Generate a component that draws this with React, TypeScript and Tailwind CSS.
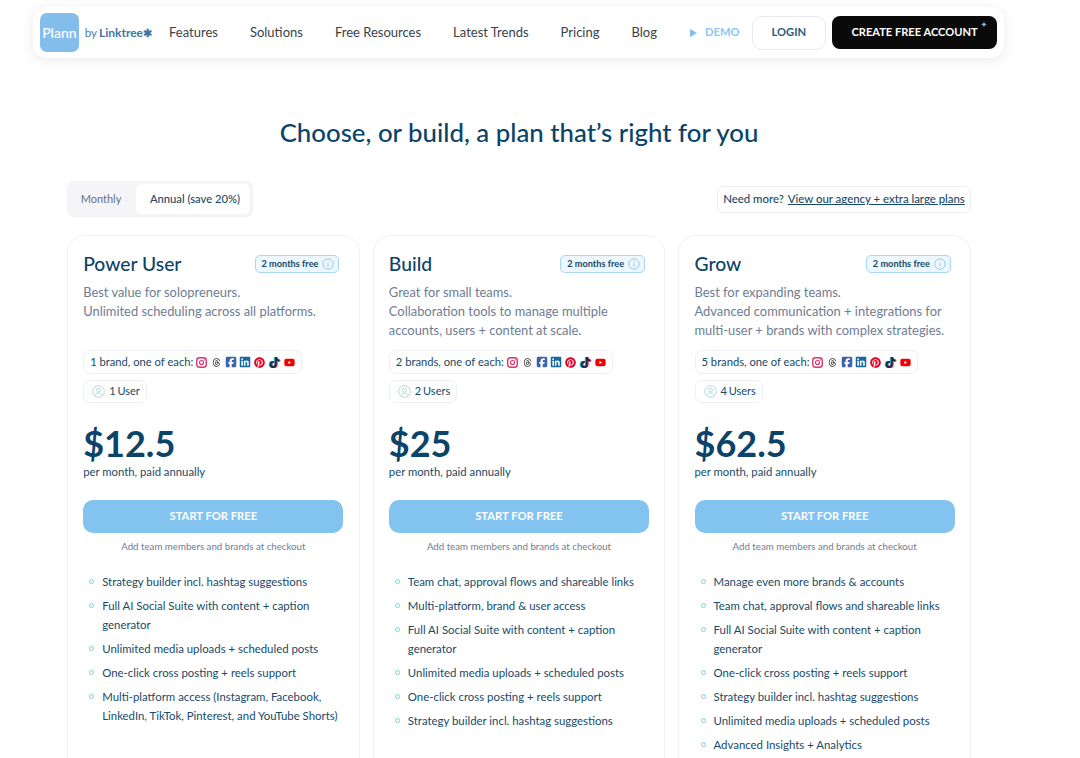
import React from 'react';
import { FaThreads, FaSquareFacebook, FaLinkedin, FaPinterest, FaTiktok, FaYoutube } from 'react-icons/fa6';

const navLinks = ['Features', 'Solutions', 'Free Resources', 'Latest Trends', 'Pricing', 'Blog'];

const plans = [
  {
    name: 'Power User',
    desc: ['Best value for solopreneurs.', 'Unlimited scheduling across all platforms.'],
    brands: '1 brand',
    users: '1 User',
    price: '$12.5',
    features: [
      'Strategy builder incl. hashtag suggestions',
      'Full AI Social Suite with content + caption generator',
      'Unlimited media uploads + scheduled posts',
      'One-click cross posting + reels support',
      'Multi-platform access (Instagram, Facebook, LinkedIn, TikTok, Pinterest, and YouTube Shorts)',
    ],
  },
  {
    name: 'Build',
    desc: ['Great for small teams.', 'Collaboration tools to manage multiple accounts, users + content at scale.'],
    brands: '2 brands',
    users: '2 Users',
    price: '$25',
    features: [
      'Team chat, approval flows and shareable links',
      'Multi-platform, brand & user access',
      'Full AI Social Suite with content + caption generator',
      'Unlimited media uploads + scheduled posts',
      'One-click cross posting + reels support',
      'Strategy builder incl. hashtag suggestions',
    ],
  },
  {
    name: 'Grow',
    desc: ['Best for expanding teams.', 'Advanced communication + integrations for multi-user + brands with complex strategies.'],
    brands: '5 brands',
    users: '4 Users',
    price: '$62.5',
    features: [
      'Manage even more brands & accounts',
      'Team chat, approval flows and shareable links',
      'Full AI Social Suite with content + caption generator',
      'One-click cross posting + reels support',
      'Strategy builder incl. hashtag suggestions',
      'Unlimited media uploads + scheduled posts',
      'Advanced Insights + Analytics',
    ],
  },
];

function InstagramIcon() {
  return (
    <svg width="11" height="11" viewBox="0 0 12 12" fill="none">
      <defs>
        <linearGradient id="ig" x1="0" y1="12" x2="12" y2="0">
          <stop offset="0" stopColor="#f9a13c" />
          <stop offset="0.5" stopColor="#e1306c" />
          <stop offset="1" stopColor="#7a4fd0" />
        </linearGradient>
      </defs>
      <rect x="0.8" y="0.8" width="10.4" height="10.4" rx="3" stroke="url(#ig)" strokeWidth="1.5" />
      <circle cx="6" cy="6" r="2.2" stroke="url(#ig)" strokeWidth="1.2" />
      <circle cx="8.8" cy="3.2" r="0.7" fill="#c13584" />
    </svg>
  );
}

function SocialIcons() {
  return (
    <span className="ml-[3px] flex items-center">
      <InstagramIcon />
      <FaThreads className="ml-[5px] text-[9px] text-[#333]" />
      <FaSquareFacebook className="ml-[4px] text-[12px] text-[#3b62ad]" />
      <FaLinkedin className="ml-[2px] text-[12px] text-[#17699f]" />
      <FaPinterest className="ml-[3px] text-[11px] text-[#e60023]" />
      <FaTiktok className="ml-[4px] text-[11px] text-[#10304a] [filter:drop-shadow(-1px_0_0_#25c4d8)_drop-shadow(1px_0_0_#fe2c55)]" />
      <FaYoutube className="ml-[4px] text-[11px] text-[#f00000]" />
    </span>
  );
}

function UserIcon() {
  return (
    <svg width="13" height="13" viewBox="0 0 14 14" fill="none" stroke="#9bd5d8" strokeWidth="0.9">
      <circle cx="7" cy="7" r="6.3" />
      <circle cx="7" cy="5.6" r="2.1" />
      <path d="M3.2 11.4c.6-1.9 2-2.8 3.8-2.8s3.2.9 3.8 2.8" />
    </svg>
  );
}

function InfoIcon() {
  return (
    <svg width="12" height="12" viewBox="0 0 12 12" fill="none" stroke="#8cc4ee" strokeWidth="0.9">
      <circle cx="6" cy="6" r="5.2" />
      <path d="M6 5.2v3.4" />
      <path d="M6 3.2v.8" />
    </svg>
  );
}

function PlanCard({ plan }: { plan: (typeof plans)[number] }) {
  return (
    <div className="h-[560px] rounded-[18px] border border-[#eef0f8] bg-white px-[15.2px] pt-[14px]">
      <div className="flex items-start justify-between">
        <h2 className="text-[19.3px] leading-[28px] font-medium text-[#0b4468]">{plan.name}</h2>
        <span className="mt-[5px] mr-[4px] flex h-[18px] items-center gap-[4px] rounded-[5px] border border-[#a9d6f5] bg-[#edf7fd] pr-[4px] pl-[6px] text-[9.2px] font-bold text-[#174a68]">
          2 months free
          <InfoIcon />
        </span>
      </div>
      <div className="mt-[5px] h-[67px] text-[12.9px] leading-[19px] text-[#6f7c92]">
        {plan.desc.map((line) => (
          <p key={line}>{line}</p>
        ))}
      </div>
      <div className="flex">
        <div className="flex h-[24px] items-center rounded-[7px] border border-[#eceef8] pr-[6px] pl-[6px] text-[11.2px] text-[#174a68]">
          {plan.brands}, one of each:
          <SocialIcons />
        </div>
      </div>
      <div className="mt-[6px] flex">
        <div className="flex h-[23px] items-center gap-[4px] rounded-[7px] border border-[#eceef8] pr-[6px] pl-[8px] text-[11px] text-[#174a68] [word-spacing:-1px]">
          <UserIcon />
          {plan.users}
        </div>
      </div>
      <div className="mt-[19px] text-[36px] leading-[42px] font-bold text-[#0b4468]">{plan.price}</div>
      <div className="text-[11.3px] leading-[16px] text-[#174a68]">per month, paid annually</div>
      <button className="mt-[20px] h-[33px] w-full rounded-[10px] bg-[#82c3ef] text-[11.2px] font-bold text-white">
        START FOR FREE
      </button>
      <div className="mt-[6px] text-center text-[9.7px] leading-[14px] text-[#6f7c92]">
        Add team members and brands at checkout
      </div>
      <ul className="mt-[19px] flex flex-col gap-[5px]">
        {plan.features.map((f) => (
          <li key={f} className="flex text-[11.4px] leading-[19px] text-[#174a68]">
            <span className="mt-[7px] mr-[8px] ml-[6px] h-[5px] w-[5px] shrink-0 rounded-full border border-[#7fd0d2]" />
            <span>{f}</span>
          </li>
        ))}
      </ul>
    </div>
  );
}

export default function App() {
  return (
    <div className="h-[758px] w-[1080px] overflow-hidden bg-white font-['Lato',sans-serif]">
      <div className="w-[1038px]">
        <div className="pt-[7px] pl-[33px]">
          <nav className="flex h-[51px] w-[971px] items-center rounded-[14px] bg-white pr-[7px] pl-[7px] shadow-[0_2px_14px_rgba(0,0,0,0.09)]">
            <div className="flex h-[39px] w-[39px] items-center justify-center rounded-[7px] bg-[#82bdec] text-[14px] font-medium text-white">
              Plann
            </div>
            <span className="ml-[6px] text-[11.5px] text-[#4d7ea8]">by</span>
            <span className="ml-[2px] text-[12px] font-bold text-[#3f76a5]">Linktree</span>
            <span className="text-[11px] leading-none font-bold text-[#3f76a5]">✱</span>
            <div className="ml-[17px] flex gap-[32px] whitespace-nowrap">
              {navLinks.map((l) => (
                <a key={l} className="text-[13px] text-[#3a3f47]">
                  {l}
                </a>
              ))}
            </div>
            <span className="ml-[33px] h-0 w-0 border-y-[4px] border-l-[7px] border-y-transparent border-l-[#82bdec]" />
            <span className="ml-[8px] text-[11.2px] font-bold text-[#8cc6f0]">DEMO</span>
            <button className="ml-[12px] h-[34px] w-[75px] rounded-[10px] border border-[#e8e8ee] text-[11.2px] font-bold text-[#2b5a80]">
              LOGIN
            </button>
            <button className="relative ml-[6px] h-[33px] w-[166px] rounded-[8px] bg-[#0a0a0a] text-[11.1px] font-bold text-white">
              CREATE FREE ACCOUNT
              <span className="absolute top-[3px] right-[10px] text-[7px] text-[#7fc4ee]">✦</span>
            </button>
          </nav>
        </div>
        <h1 className="mt-[58px] text-center text-[25.8px] leading-[32px] font-medium text-[#0b4468]">
          Choose, or build, a plan that’s right for you
        </h1>
        <div className="mx-auto mt-[33px] w-[904px]">
          <div className="flex items-center justify-between">
            <div className="flex h-[36px] rounded-[7px] border border-[#f3f3f6] bg-[#f5f5f7] p-[2px]">
              <span className="flex w-[66px] items-center justify-center pr-[4px] text-[11px] text-[#667085]">Monthly</span>
              <span className="flex w-[114px] items-center justify-center rounded-[5px] bg-white pl-[4px] text-[11.2px] font-medium text-[#174a68]">
                Annual (save 20%)
              </span>
            </div>
            <div className="flex h-[27px] w-[254px] items-center justify-center gap-[4px] rounded-[6px] border border-[#eceef8] text-[11.4px] font-medium text-[#174a68]">
              Need more?
              <a className="underline">View our agency + extra large plans</a>
            </div>
          </div>
          <div className="mt-[18px] grid grid-cols-3 gap-[13px]">
            {plans.map((p) => (
              <PlanCard key={p.name} plan={p} />
            ))}
          </div>
        </div>
      </div>
    </div>
  );
}
